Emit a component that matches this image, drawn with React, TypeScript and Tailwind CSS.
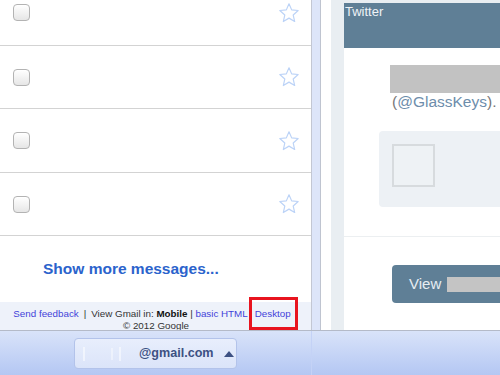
import React from "react";

const font = { fontFamily: '"Liberation Sans", Helvetica, Arial, sans-serif' };

function Star() {
  return (
    <svg width="22" height="22" viewBox="0 0 24 24" className="shrink-0">
      <polygon
        points="12,2 14.9,8.6 22,9.3 16.6,14.2 18.2,21.3 12,17.6 5.8,21.3 7.4,14.2 2,9.3 9.1,8.6"
        fill="none"
        stroke="#bcd3f7"
        strokeWidth="1.3"
        strokeLinejoin="round"
      />
    </svg>
  );
}

function Checkbox() {
  return (
    <div className="w-[17px] h-[17px] rounded-[4px] border border-[#b3b3b3] bg-gradient-to-b from-white to-[#e6e6e6] shadow-[inset_0_1px_0_#fff]" />
  );
}

function Row({ h, top }: { h: string; top?: boolean }) {
  return (
    <div
      className={`${h} flex ${top ? "items-start pt-[4px]" : "items-center"} pl-[13px] pr-[11px] justify-between border-b border-[#d3d3d3]`}
    >
      <Checkbox />
      <div className={top ? "-mt-[2px]" : ""}>
        <Star />
      </div>
    </div>
  );
}

export default function App() {
  return (
    <div className="relative w-[500px] h-[375px] overflow-hidden flex flex-col bg-white" style={font}>
      <div className="h-[330px] flex flex-row">
        {/* Left pane */}
        <div className="w-[311px] shrink-0 flex flex-col bg-white">
          <Row h="h-[46px]" top />
          <Row h="h-[63px]" />
          <Row h="h-[64px]" />
          <Row h="h-[63px]" />
          <div className="h-[66px] flex items-center pl-[43px]">
            <span className="text-[15.5px] font-bold text-[#2b63cc]">Show more messages...</span>
          </div>
          <div className="h-[28px] bg-[#eef2fa] text-center text-[9.8px] leading-[12px] text-[#333] pt-[6px]">
            <div className="whitespace-nowrap pr-[7px]">
              <span className="text-[#4343d9]">Send feedback</span>
              <span className="px-[5px]">|</span>
              <span>View Gmail in: </span>
              <span className="font-bold text-[#111]">Mobile</span>
              <span> | </span>
              <span className="text-[#4343d9]">basic HTML</span>
              <span className="pl-[7px] text-[#4343d9]">Desktop</span>
            </div>
            <div className="pl-[1px]">© 2012 Google</div>
          </div>
        </div>
        {/* divider strip */}
        <div className="w-[1px] bg-[#c3c7d3]" />
        <div className="w-[8px] bg-[#dde5f9]" />
        <div className="w-[1px] bg-[#bfc4d0]" />
        <div className="w-[10px] bg-white" />
        {/* Right pane */}
        <div className="flex-1 bg-[#e9eef2] pl-[13px] pt-[3px] overflow-hidden">
          <div className="w-[260px] h-full bg-white flex flex-col">
            <div className="h-[45px] bg-[#5f7f96] pl-[1px]">
              <span className="block text-[13px] leading-[18px] text-[#eef2f6]">Twitter</span>
            </div>
            <div className="pl-[46px] pt-[17px]">
              <div className="h-[28px] w-[200px] bg-[#c2c2c2]" />
              <div className="pl-[2px] text-[15.5px] leading-[18px] text-[#777] whitespace-nowrap">
                (<span className="text-[#6d8dab]">@GlassKeys</span>).
              </div>
            </div>
            <div className="pl-[35px] pt-[20px]">
              <div className="h-[76px] w-[200px] rounded-[4px] bg-[#edf1f5] pl-[13px] pt-[13px]">
                <div className="w-[43px] h-[43px] border-2 border-[#d7dbde] bg-[#eef2f5]" />
              </div>
            </div>
            <div className="mt-[29px] h-[1px] bg-[#eceff1]" />
            <div className="pl-[48px] pt-[28px]">
              <div className="h-[38px] w-[200px] rounded-[4px] bg-[#5f7f96] flex items-center pl-[17px]">
                <span className="text-[15px] text-[#e6edf2]">View</span>
                <div className="ml-[6px] h-[15px] w-[140px] bg-[#c4c4c4]" />
              </div>
            </div>
          </div>
        </div>
      </div>
      {/* Bottom bar */}
      <div className="h-[45px] border-t border-[#b4bac8] bg-gradient-to-b from-[#d9e3f9] to-[#b4c7f3] flex flex-row">
        <div className="w-[312px] border-r border-[#c4d2f6] pl-[74px] pt-[7px]">
          <div className="w-[163px] h-[31px] rounded-[4px] border border-[#b3c3ea] bg-gradient-to-b from-[#e8eefc] to-[#dbe4f9] flex items-center">
            <div className="w-[64px] flex items-center gap-[6px] pl-[8px] shrink-0">
              <div className="w-[2px] h-[14px] bg-white/50" />
              <div className="w-[2px] h-[12px] bg-white/40 ml-[20px]" />
              <div className="w-[2px] h-[14px] bg-white/50" />
            </div>
            <span className="text-[12.6px] font-bold text-[#3d5183] whitespace-nowrap">@gmail.com</span>
            <svg width="10" height="6" viewBox="0 0 10 6" className="ml-[10px] shrink-0">
              <polygon points="0,6 5,0 10,6" fill="#3d5183" />
            </svg>
          </div>
        </div>
      </div>
      {/* red highlight overlay */}
      <div className="absolute left-[249px] top-[297px] w-[49px] h-[33px] border-[3px] border-[#e8141f]" />
    </div>
  );
}
